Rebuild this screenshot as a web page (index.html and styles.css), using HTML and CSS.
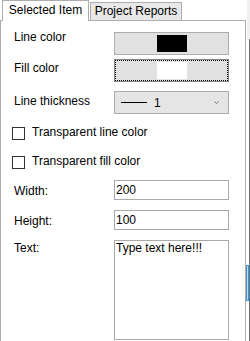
FILE: index.html
```html
<!DOCTYPE html>
<html lang="en">
<head>
    <meta charset="UTF-8">
    <title>Selected Item</title>
    <link rel="stylesheet" href="styles.css">
</head>
<body>

<div class="window">
    <div class="main">
        <div class="tabs">
            <div class="tab tab-active">Selected Item</div>
            <div class="tab tab-other">Project Reports</div>
        </div>

        <div class="panel">
            <div class="row row-line">
                <label class="label label-line">Line color</label>
                <button type="button" class="color-btn"><span class="swatch swatch-black"></span></button>
            </div>

            <div class="row row-fill">
                <label class="label label-fill">Fill color</label>
                <button type="button" class="color-btn color-btn-focus"><span class="swatch swatch-white"></span></button>
            </div>

            <div class="row row-thickness">
                <label class="label label-thickness">Line thickness</label>
                <div class="combo">
                    <span class="combo-line"></span>
                    <span class="combo-value">1</span>
                    <svg class="combo-arrow" width="5" height="3" viewBox="0 0 5 3">
                        <polyline points="0.5,0.5 2.5,2.5 4.5,0.5" fill="none" stroke="#707070" stroke-width="1"/>
                    </svg>
                </div>
            </div>

            <div class="check-row check-line">
                <span class="check"></span>
                <span class="check-label">Transparent line color</span>
            </div>

            <div class="check-row check-fill">
                <span class="check"></span>
                <span class="check-label">Transparent fill color</span>
            </div>

            <div class="row row-width">
                <label class="label label-field" for="width">Width:</label>
                <input class="field" id="width" type="text" value="200">
            </div>

            <div class="row row-height">
                <label class="label label-field" for="height">Height:</label>
                <input class="field" id="height" type="text" value="100">
            </div>

            <div class="row row-text">
                <label class="label label-text" for="text">Text:</label>
                <textarea class="field-area" id="text">Type text here!!!</textarea>
            </div>
        </div>
    </div>

    <div class="side">
        <div class="side-top"></div>
        <div class="side-rest">
            <div class="side-thumb"></div>
        </div>
    </div>
</div>

</body>
</html>
```

FILE: styles.css
```css
body {
    margin: 0;
    font-family: "Liberation Sans", Arial, sans-serif;
    font-size: 12px;
    color: #000;
    background: #fff;
    overflow: hidden;
}
.window {
    display: flex;
    width: 250px;
    height: 341px;
    overflow: hidden;
}
.main {
    width: 246px;
    flex-shrink: 0;
}

/* tab strip */
.tabs {
    display: flex;
    align-items: flex-start;
    height: 20px;
    padding-left: 2px;
}
.tab {
    box-sizing: border-box;
    border: 1px solid #adadad;
    border-bottom: none;
    line-height: 14px;
    text-align: center;
    white-space: nowrap;
}
.tab-active {
    position: relative;
    z-index: 1;
    width: 87px;
    height: 21px;
    padding-top: 2px;
    background: #fff;
}
.tab-other {
    width: 92px;
    height: 18px;
    margin-top: 2px;
    margin-left: 1px;
    padding-top: 1px;
    background: #e8e8e8;
}

/* panel */
.panel {
    box-sizing: border-box;
    height: 330px;
    border: 1px solid #adadad;
    padding: 11px 16px 0 13px;
}
.row {
    display: flex;
    align-items: flex-start;
}
.label {
    width: 100px;
    flex-shrink: 0;
    line-height: 14px;
}
.row-fill { margin-top: 4px; }
.row-thickness { margin-top: 9px; }
.row-width { margin-top: 11px; }
.row-height { margin-top: 10px; }
.row-text { margin-top: 10px; }

.label-line { margin-top: -2px; }
.label-fill { margin-top: 2px; }
.label-thickness { margin-top: 3px; }
.label-field { margin-top: 4px; }
.label-text { margin-top: 1px; }

/* colour buttons */
.color-btn {
    box-sizing: border-box;
    width: 115px;
    height: 23px;
    padding: 0;
    border: 1px solid #adadad;
    background: #e1e1e1;
    display: flex;
    align-items: center;
    justify-content: center;
}
.color-btn-focus {
    border-color: #858585;
    outline: 1px dotted #000;
    outline-offset: -2px;
}
.swatch {
    width: 30px;
    height: 17px;
}
.swatch-black { background: #000; }
.swatch-white { background: #fff; }

/* combo */
.combo {
    box-sizing: border-box;
    width: 115px;
    height: 23px;
    border: 1px solid #acacac;
    background: #e5e5e5;
    display: flex;
    align-items: center;
    padding-left: 6px;
}
.combo-line {
    width: 26px;
    height: 1px;
    background: #000;
}
.combo-value {
    margin-left: 7px;
    line-height: 14px;
}
.combo-arrow {
    margin-left: auto;
    margin-right: 9px;
}

/* checkboxes */
.check-row {
    display: flex;
    align-items: flex-start;
    margin-left: -2px;
}
.check-line { margin-top: 13px; }
.check-fill { margin-top: 16px; }
.check {
    box-sizing: border-box;
    width: 13px;
    height: 13px;
    border: 1px solid #333;
    background: #fff;
}
.check-label {
    margin-left: 7px;
    margin-top: -2px;
    line-height: 14px;
}

/* text fields */
.field, .field-area {
    box-sizing: border-box;
    width: 115px;
    margin: 0;
    border: 1px solid #a9a9a9;
    font-family: "Liberation Sans", Arial, sans-serif;
    font-size: 12px;
    color: #000;
    background: #fff;
}
.field {
    height: 20px;
    padding: 0 1px;
}
.field-area {
    height: 100px;
    padding: 0 1px;
    line-height: 14px;
    resize: none;
    overflow: hidden;
}

/* right edge */
.side {
    width: 4px;
    display: flex;
    flex-direction: column;
}
.side-top {
    height: 39px;
    margin-left: 1px;
    background: #f0f0f0;
}
.side-rest {
    flex: 1;
    border-right: 1px solid #6d6d6d;
}
.side-thumb {
    box-sizing: border-box;
    width: 3px;
    height: 36px;
    margin-top: 226px;
    border: 1px solid #3d95d8;
    background: #bcdcf4;
}
```
